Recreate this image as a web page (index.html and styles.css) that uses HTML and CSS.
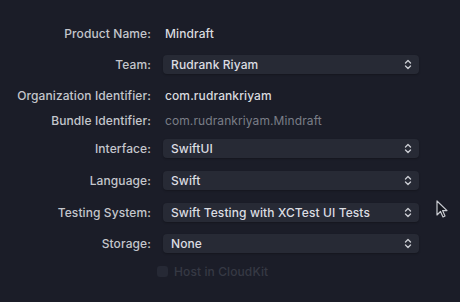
FILE: index.html
```html
<!DOCTYPE html>
<html>
<head>
<meta charset="utf-8">
<link rel="stylesheet" href="styles.css">
</head>
<body>
<div class="form">
  <div class="label">Product Name:</div>
  <div class="value">Mindraft</div>

  <div class="label">Team:</div>
  <div class="popup"><span>Rudrank Riyam</span><svg class="chev" viewBox="0 0 8 11"><path d="M1.5 4 L4 1.5 L6.5 4 M1.5 7 L4 9.5 L6.5 7"/></svg></div>

  <div class="label">Organization Identifier:</div>
  <div class="value">com.rudrankriyam</div>

  <div class="label">Bundle Identifier:</div>
  <div class="value dim">com.rudrankriyam.Mindraft</div>

  <div class="label">Interface:</div>
  <div class="popup"><span>SwiftUI</span><svg class="chev" viewBox="0 0 8 11"><path d="M1.5 4 L4 1.5 L6.5 4 M1.5 7 L4 9.5 L6.5 7"/></svg></div>

  <div class="label">Language:</div>
  <div class="popup"><span>Swift</span><svg class="chev" viewBox="0 0 8 11"><path d="M1.5 4 L4 1.5 L6.5 4 M1.5 7 L4 9.5 L6.5 7"/></svg></div>

  <div class="label">Testing System:</div>
  <div class="popup"><span>Swift Testing with XCTest UI Tests</span><svg class="chev" viewBox="0 0 8 11"><path d="M1.5 4 L4 1.5 L6.5 4 M1.5 7 L4 9.5 L6.5 7"/></svg></div>

  <div class="label">Storage:</div>
  <div class="popup"><span>None</span><svg class="chev" viewBox="0 0 8 11"><path d="M1.5 4 L4 1.5 L6.5 4 M1.5 7 L4 9.5 L6.5 7"/></svg></div>

  <div class="label"></div>
  <div class="check"><span class="box"></span><span>Host in CloudKit</span></div>
</div>
<svg class="cursor" viewBox="0 0 12 19"><path d="M1 1 L1 15 L4.5 11.5 L7 17 L9 16 L6.6 10.6 L11 10.6 Z"/></svg>
</body>
</html>
```

FILE: styles.css
```css
html, body {
  margin: 0;
  padding: 0;
  width: 460px;
  height: 302px;
  overflow: hidden;
  background: #1b1d28;
  font-family: Inter, "Liberation Sans", sans-serif;
  font-size: 12px;
  letter-spacing: 0.1px;
  position: relative;
}

.form {
  display: grid;
  grid-template-columns: 151px 256px;
  grid-template-rows: 30px 32px 30px 20px 36px 28px 36px 26px 30px;
  column-gap: 12px;
  padding-top: 18px;
  align-items: center;
}

.label {
  text-align: right;
  color: #c4c6cc;
  font-weight: 500;
  white-space: nowrap;
}

.value {
  color: #d9dadf;
  font-weight: 500;
  padding-left: 2px;
  white-space: nowrap;
}

.value.dim {
  color: #7a7d87;
  font-weight: 400;
}

.popup {
  height: 19px;
  background: #272a35;
  border-radius: 4px;
  box-shadow: 0 1px 2px rgba(0, 0, 0, 0.25);
  display: flex;
  align-items: center;
  justify-content: space-between;
  padding: 0 7px 0 8px;
  color: #dcdde2;
  font-weight: 500;
  white-space: nowrap;
}

.chev {
  width: 8px;
  height: 11px;
  fill: none;
  stroke: #c9cbd1;
  stroke-width: 1.4;
  stroke-linecap: round;
  stroke-linejoin: round;
}

.check {
  display: flex;
  align-items: center;
  gap: 6px;
  margin-left: -6px;
  color: #363944;
  font-weight: 500;
}

.check .box {
  width: 11px;
  height: 11px;
  border-radius: 3px;
  background: #262935;
}

.cursor {
  position: absolute;
  left: 436px;
  top: 200px;
  width: 12px;
  height: 19px;
}

.cursor path {
  fill: #15171f;
  stroke: #c9cbd1;
  stroke-width: 1.2;
  stroke-linejoin: round;
}
```
